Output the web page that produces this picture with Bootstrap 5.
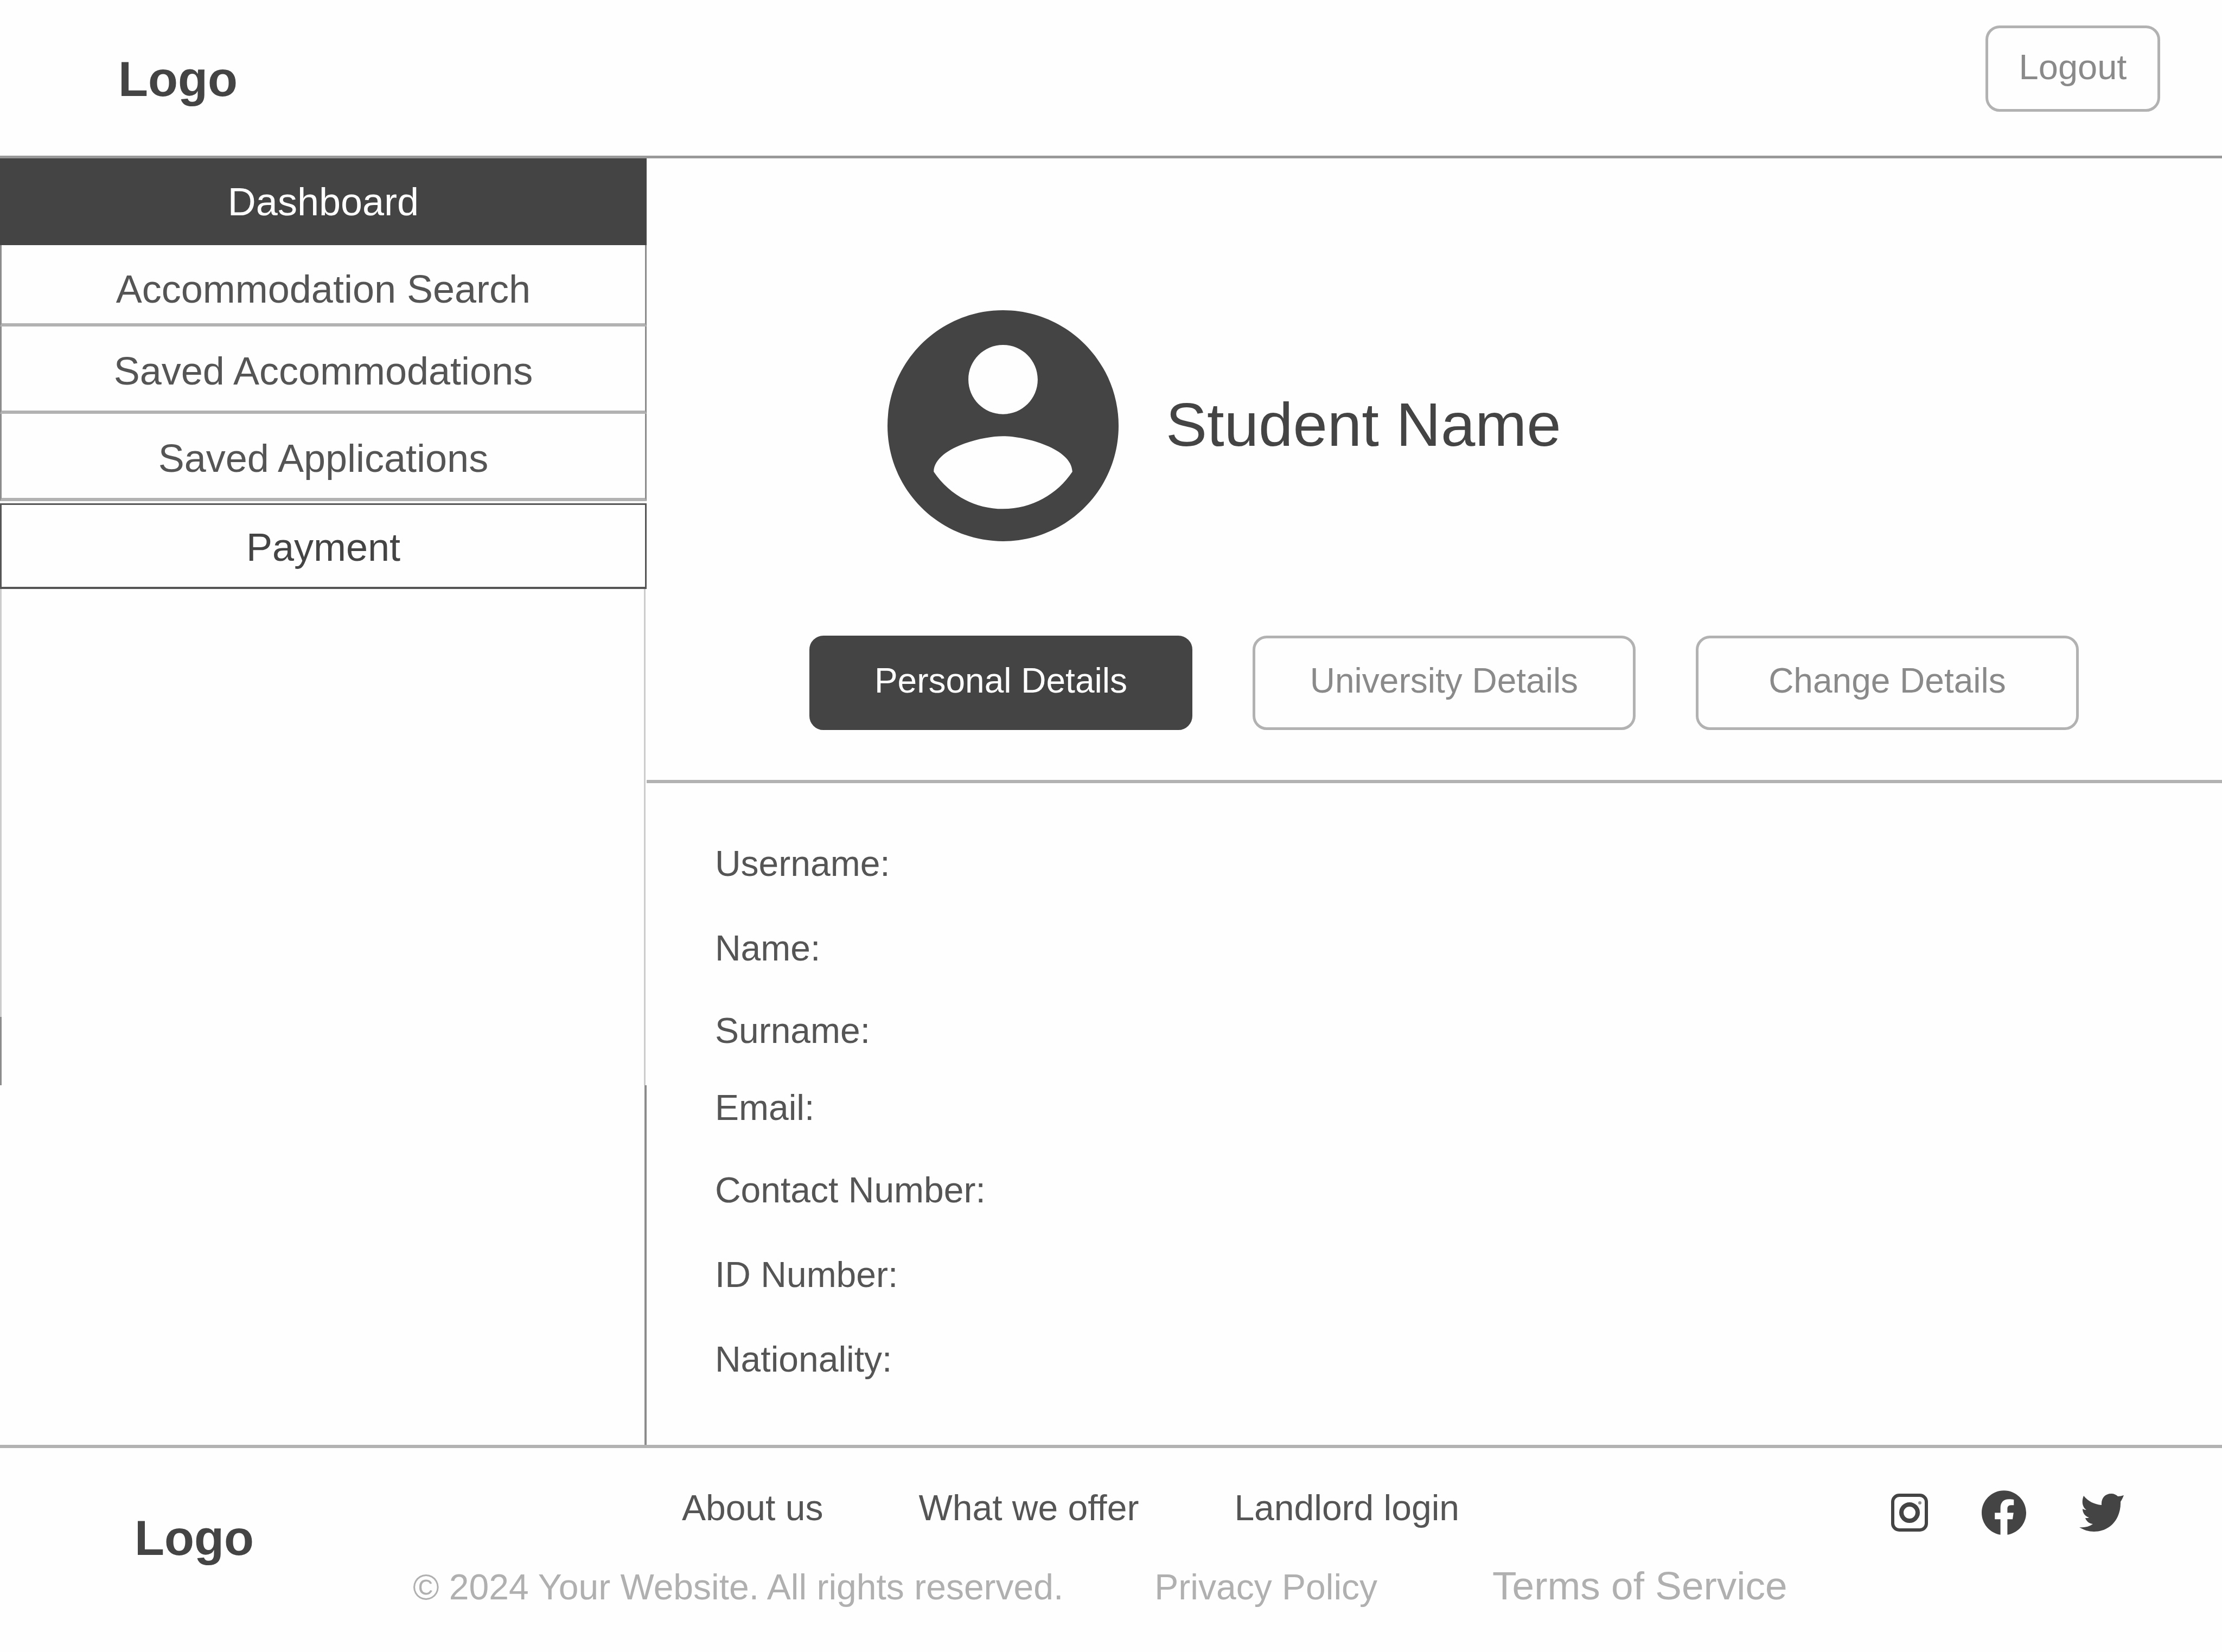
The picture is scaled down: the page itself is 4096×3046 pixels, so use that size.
<!DOCTYPE html>
<html lang="en">
<head>
<meta charset="utf-8">
<meta name="viewport" content="width=device-width, initial-scale=1">
<title>Student dashboard</title>
<link href="https://cdn.jsdelivr.net/npm/bootstrap@5.3.0/dist/css/bootstrap.min.css" rel="stylesheet">
<style>
:root { --ink: #444; --ink-soft: #555; --rule: #b2b2b2; --edge: #8c8c8c; --muted: #8a8a8a; --faint: #b0b0b0; }
body { font-family: "Liberation Sans", Arial, sans-serif; font-size: 66px; line-height: 80px; color: var(--ink-soft); background: #fefefe; }
a { color: inherit; text-decoration: none; }
.site-logo { font-size: 90px; line-height: 100px; font-weight: 700; color: var(--ink); }
.site-header { height: 292px; padding-top: 4px; padding-left: 218px; padding-right: 114px; border-bottom: 5px solid #999; }
.outline-btn { --bs-btn-color: var(--muted); --bs-btn-border-color: var(--rule); --bs-btn-border-width: 5px; --bs-btn-border-radius: 26px; --bs-btn-font-size: 65px; --bs-btn-line-height: 80px; --bs-btn-padding-y: 0; --bs-btn-padding-x: 0;
  --bs-btn-hover-color: #fff; --bs-btn-hover-bg: var(--ink); --bs-btn-active-color: #fff; --bs-btn-active-bg: var(--ink); --bs-btn-active-border-color: var(--ink); }
.logout-btn { width: 322px; height: 159px; margin-top: 43px; padding-bottom: 6px; }
.tab-btn { --bs-btn-font-size: 64px; width: 706px; height: 174px; padding-bottom: 8px; }
.side-col { flex: 0 0 29.1%; }
.side-link { height: 161px; padding-top: 8px; font-size: 72px; border: solid var(--edge); border-width: 0 3px; border-bottom: 6px solid var(--rule); }
.side-link.active { height: 160px; padding-top: 0; color: #fff; background: var(--ink); border: 0; }
.side-first { height: 150px; padding-top: 18px; }
.side-last { height: 158px; margin-top: 4px; padding-top: 4px; border: 3px solid var(--ink-soft); border-bottom-width: 4px; color: var(--ink); }
.edge-top { flex: 50; margin-right: 2px; border: solid #ccc; border-width: 0 3px; }
.edge-mid { flex: 8; margin-right: 2px; border-left: 3px solid var(--edge); border-right: 3px solid #ccc; }
.edge-end { flex: 42; border-right: 4px solid var(--edge); }
.profile-head { padding: 280px 0 92px 300px; border-bottom: 6px solid var(--rule); }
.avatar { width: 426px; height: 426px; margin-left: 144px; color: var(--ink); }
.student-name { font-size: 114px; line-height: 130px; margin-left: 87px; padding-bottom: 4px; color: var(--ink); }
.tab-row { gap: 111px; margin-top: 174px; }
.details { padding: 108px 126px 118px; }
.details dt { font-weight: 400; margin-top: 76px; }
.details dt:first-child { margin-top: 0; }
.details .snug { margin-top: 72px; }
.details .tight { margin-top: 62px; }
.site-footer { padding: 70px 181px 82px 248px; border-top: 6px solid var(--rule); }
.foot-logo { margin-top: 46px; }
.foot-mid { margin-left: 293px; }
.foot-links { gap: 176px; padding-left: 496px; }
.foot-legal { margin-top: 64px; color: var(--faint); }
.legal-policy { margin-left: 168px; }
.legal-terms { margin-left: 212px; font-size: 73px; }
.foot-social { gap: 98px; height: 98px; color: var(--ink); }
svg { display: block; fill: currentColor; }
</style>
<script src="https://cdn.jsdelivr.net/npm/bootstrap@5.3.0/dist/js/bootstrap.bundle.min.js"></script>
</head>
<body class="min-vh-100 d-flex flex-column">
<header class="site-header d-flex align-items-center justify-content-between">
  <a class="site-logo" href="#">Logo</a>
  <button type="button" class="btn outline-btn logout-btn align-self-start">Logout</button>
</header>

<div class="d-flex flex-grow-1">
  <nav class="side-col d-flex flex-column text-center" aria-label="Main">
    <a class="side-link active d-flex align-items-center justify-content-center" href="#" aria-current="page">Dashboard</a>
    <a class="side-link side-first d-flex align-items-center justify-content-center" href="#">Accommodation Search</a>
    <a class="side-link d-flex align-items-center justify-content-center" href="#">Saved Accommodations</a>
    <a class="side-link d-flex align-items-center justify-content-center" href="#">Saved Applications</a>
    <a class="side-link side-last d-flex align-items-center justify-content-center" href="#">Payment</a>
    <div class="edge-top"></div>
    <div class="edge-mid"></div>
    <div class="edge-end"></div>
  </nav>

  <main class="flex-grow-1">
    <section class="profile-head">
      <div class="d-flex align-items-center">
        <svg class="avatar flex-shrink-0" viewBox="2 2 20 20" role="img" aria-label="Profile picture"><path d="M12 2C6.480 2 2 6.480 2 12s4.480 10 10 10 10-4.480 10-10S17.520 2 12 2zm0 3c1.660 0 3 1.340 3 3s-1.340 3-3 3-3-1.340-3-3 1.340-3 3-3zm0 14.200c-2.500 0-4.710-1.280-6-3.220.03-1.990 4-3.080 6-3.080 1.990 0 5.970 1.090 6 3.080-1.290 1.940-3.500 3.220-6 3.220z"/></svg>
        <h1 class="student-name fw-normal mb-0">Student Name</h1>
      </div>
      <div class="tab-row d-flex">
        <button type="button" class="btn outline-btn tab-btn active">Personal Details</button>
        <button type="button" class="btn outline-btn tab-btn">University Details</button>
        <button type="button" class="btn outline-btn tab-btn">Change Details</button>
      </div>
    </section>
    <dl class="details mb-0">
      <dt>Username:</dt>
      <dt>Name:</dt>
      <dt class="snug">Surname:</dt>
      <dt class="tight">Email:</dt>
      <dt class="snug">Contact Number:</dt>
      <dt>ID Number:</dt>
      <dt>Nationality:</dt>
    </dl>
  </main>
</div>

<footer class="site-footer d-flex align-items-start">
  <a class="site-logo foot-logo" href="#">Logo</a>
  <div class="foot-mid">
    <nav class="foot-links d-flex" aria-label="Footer">
      <a href="#">About us</a>
      <a href="#">What we offer</a>
      <a href="#">Landlord login</a>
    </nav>
    <div class="foot-legal d-flex align-items-baseline">
      <span>© 2024 Your Website. All rights reserved.</span>
      <a class="legal-policy" href="#">Privacy Policy</a>
      <a class="legal-terms" href="#">Terms of Service</a>
    </div>
  </div>
  <div class="foot-social d-flex align-items-center ms-auto">
    <a href="#" aria-label="Instagram"><svg width="70" height="72" viewBox="0 0 70 72"><rect x="4" y="4" width="62" height="64" rx="12" fill="none" stroke="currentColor" stroke-width="6"/><circle cx="35" cy="36" r="15" fill="none" stroke="currentColor" stroke-width="8"/><circle cx="54" cy="18" r="3" opacity=".6"/></svg></a>
    <a href="#" aria-label="Facebook"><svg width="82" height="82" viewBox="2 2 20 20"><path d="M12 2.040C6.500 2.040 2 6.530 2 12.060C2 17.060 5.660 21.210 10.440 21.960V14.960H7.900V12.060H10.440V9.850C10.440 7.340 11.930 5.960 14.220 5.960C15.310 5.960 16.450 6.150 16.450 6.150V8.620H15.190C13.950 8.620 13.560 9.390 13.560 10.180V12.060H16.340L15.890 14.960H13.560V21.960C18.340 21.210 22 17.060 22 12.060C22 6.530 17.500 2.040 12 2.040Z"/></svg></a>
    <a href="#" aria-label="Twitter"><svg width="82" height="70" viewBox="0 0 82 70"><path d="M8 4C16 14 28 20 41 21C40 9 47 0 59 0C64 0 68 2 71 5C75 5 78 4 82 3C80 8 78 12 76 15C77 46 57 70 27 70C17 70 8 67 0 62C9 63 18 61 25 56C18 55 13 51 11 45C14 45 16 45 18 44C11 42 6 36 6 28C8 29 10 30 13 30C5 24 4 14 8 4Z"/></svg></a>
  </div>
</footer>
</body>
</html>
